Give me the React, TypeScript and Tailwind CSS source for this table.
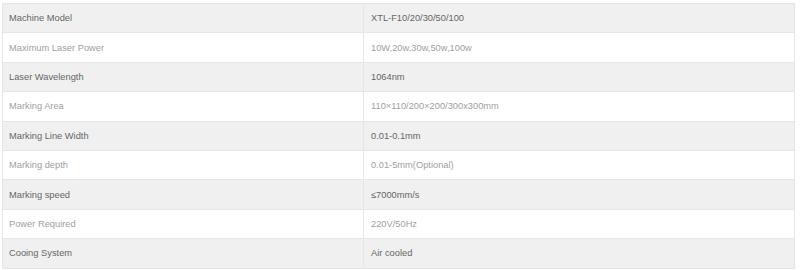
const specs = [
  ["Machine Model", "XTL-F10/20/30/50/100"],
  ["Maximum Laser Power", "10W,20w,30w,50w,100w"],
  ["Laser Wavelength", "1064nm"],
  ["Marking Area", "110×110/200×200/300x300mm"],
  ["Marking Line Width", "0.01-0.1mm"],
  ["Marking depth", "0.01-5mm(Optional)"],
  ["Marking speed", "≤7000mm/s"],
  ["Power Required", "220V/50Hz"],
  ["Cooing System", "Air cooled"],
];

export default function App() {
  return (
    <div className="h-[270px] w-[800px] bg-white pl-[2px] pt-[3px] font-['Liberation_Sans',Arial,sans-serif] text-[9.3px]">
      <table className="w-[793px] border-collapse border border-[#e6e6e6]">
        <tbody>
          {specs.map(([label, value], i) => (
            <tr
              key={label}
              className={i % 2 === 0 ? "h-[29.4px] bg-[#f0f0f0] text-[#666]" : "h-[29.4px] bg-white text-[#a0a0a0]"}
            >
              <td className="w-[361px] border border-[#e6e6e6] px-[6px] pt-[2px] align-middle">{label}</td>
              <td className="border border-[#e6e6e6] px-[7px] pt-[2px] align-middle">{value}</td>
            </tr>
          ))}
        </tbody>
      </table>
    </div>
  );
}
